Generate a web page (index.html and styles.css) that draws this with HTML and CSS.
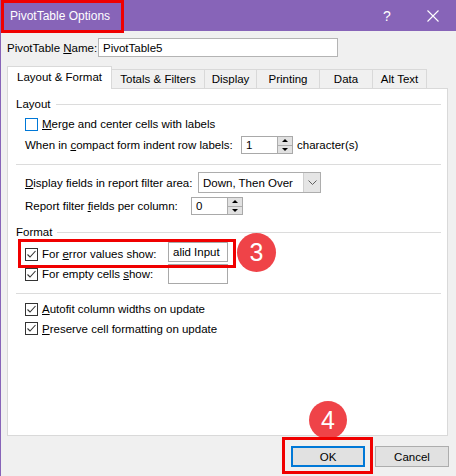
FILE: index.html
```html
<!DOCTYPE html>
<html>
<head>
<meta charset="utf-8">
<title>PivotTable Options</title>
<link rel="stylesheet" href="styles.css">
</head>
<body>
<div class="window">
  <div class="titlebar">
    <span class="title">PivotTable Options</span>
    <span class="tb-btn help">?</span>
    <span class="tb-btn close"><svg width="12" height="12" viewBox="0 0 12 12"><path d="M0.5 0.5L11.5 11.5M11.5 0.5L0.5 11.5" stroke="#fff" stroke-width="1.1" fill="none"/></svg></span>
  </div>
  <div class="content">
    <div class="name-row">
      <span class="name-label">PivotTable <u>N</u>ame:</span>
      <div class="textbox name-box">PivotTable5</div>
    </div>
    <div class="tabs">
      <div class="tab active">Layout &amp; Format</div>
      <div class="tab">Totals &amp; Filters</div>
      <div class="tab">Display</div>
      <div class="tab">Printing</div>
      <div class="tab">Data</div>
      <div class="tab">Alt Text</div>
    </div>
    <div class="panel">
      <div class="section-head">Layout</div>
      <div class="row row-merge">
        <span class="checkbox focus"></span>
        <span class="cb-label"><u>M</u>erge and center cells with labels</span>
      </div>
      <div class="row row-indent">
        <span class="lbl lbl-indent">When in <u>c</u>ompact form indent row labels:</span>
        <div class="spin"><span class="spin-val">1</span><span class="spin-btns"><span class="spin-up"></span><span class="spin-down"></span></span></div>
        <span class="after">character(s)</span>
      </div>
      <div class="sep sep-1"></div>
      <div class="row row-display">
        <span class="lbl lbl-display"><u>D</u>isplay fields in report filter area:</span>
        <div class="combo"><span class="combo-val">Down, Then Over</span><span class="combo-btn"><svg width="9" height="5" viewBox="0 0 9 5"><path d="M0.5 0.5L4.5 4.5L8.5 0.5" stroke="#606060" fill="none" stroke-width="1"/></svg></span></div>
      </div>
      <div class="row row-report">
        <span class="lbl lbl-report">Report filter <u>f</u>ields per column:</span>
        <div class="spin"><span class="spin-val">0</span><span class="spin-btns"><span class="spin-up"></span><span class="spin-down"></span></span></div>
      </div>
      <div class="section-head head-format">Format</div>
      <div class="row row-error">
        <span class="checkbox checked"><svg width="11" height="11" viewBox="0 0 11 11"><path d="M1.5 5.5L4 8L9.5 2" stroke="#333" stroke-width="1.1" fill="none"/></svg></span>
        <span class="cb-label cb-fixed">For <u>e</u>rror values show:</span>
        <div class="textbox val-box up">alid Input</div>
      </div>
      <div class="row row-empty">
        <span class="checkbox checked"><svg width="11" height="11" viewBox="0 0 11 11"><path d="M1.5 5.5L4 8L9.5 2" stroke="#333" stroke-width="1.1" fill="none"/></svg></span>
        <span class="cb-label cb-fixed">For empty cells <u>s</u>how:</span>
        <div class="textbox val-box"></div>
      </div>
      <div class="sep sep-2"></div>
      <div class="row row-autofit">
        <span class="checkbox checked"><svg width="11" height="11" viewBox="0 0 11 11"><path d="M1.5 5.5L4 8L9.5 2" stroke="#333" stroke-width="1.1" fill="none"/></svg></span>
        <span class="cb-label"><u>A</u>utofit column widths on update</span>
      </div>
      <div class="row row-preserve">
        <span class="checkbox checked"><svg width="11" height="11" viewBox="0 0 11 11"><path d="M1.5 5.5L4 8L9.5 2" stroke="#333" stroke-width="1.1" fill="none"/></svg></span>
        <span class="cb-label"><u>P</u>reserve cell formatting on update</span>
      </div>
    </div>
    <div class="footer">
      <div class="btn btn-default">OK</div>
      <div class="btn">Cancel</div>
    </div>
  </div>

  <div class="mark mark-title"></div>
  <div class="mark mark-error"></div>
  <div class="badge badge-3">3</div>
  <div class="badge badge-4">4</div>
  <div class="mark mark-ok"></div>
</div>
</body>
</html>
```

FILE: styles.css
```css
* { box-sizing: border-box; }
html, body { margin: 0; padding: 0; }
body {
  font-family: "Liberation Sans", Arial, sans-serif;
  font-size: 11.5px;
  color: #000;
  background: #f0f0f0;
  white-space: nowrap;
}
u { text-decoration: underline; text-underline-offset: 1px; }

.window {
  position: relative;
  width: 456px;
  height: 476px;
  overflow: hidden;
  background: #f0f0f0;
  border-left: 1px solid #8764b8;
}

.titlebar {
  height: 31px;
  background: #8764b8;
  color: #fff;
  display: flex;
  align-items: center;
  margin-left: -1px;
}
.title { padding-left: 10px; font-size: 12px; }
.tb-btn {
  width: 46px;
  height: 31px;
  display: flex;
  align-items: center;
  justify-content: center;
}
.help { margin-left: auto; font-size: 14px; }

.content { padding-left: 6px; }

.name-row {
  display: flex;
  align-items: center;
  margin-top: 7px;
  height: 19px;
}
.name-label { width: 91px; flex: none; }
.textbox {
  background: #fff;
  border: 1px solid #a9a9a9;
  display: flex;
  align-items: center;
  padding-left: 4px;
  flex: none;
}
.name-box { width: 240px; height: 19px; border-color: #b4b4b4; }

.tabs {
  display: flex;
  align-items: flex-end;
  height: 22px;
  margin-top: 9px;
}
.tab {
  height: 19px;
  border: 1px solid #d9d9d9;
  border-bottom: none;
  margin-left: -1px;
  display: flex;
  align-items: center;
  justify-content: center;
  background: #f0f0f0;
  flex: none;
}
.tab.active {
  height: 23px;
  margin-left: 0;
  margin-bottom: -1px;
  background: #fff;
  position: relative;
  z-index: 1;
  padding-bottom: 2px;
}
.tab:nth-child(1) { width: 105px; }
.tab:nth-child(2) { width: 94px; }
.tab:nth-child(3) { width: 53px; }
.tab:nth-child(4) { width: 64px; }
.tab:nth-child(5) { width: 54px; }
.tab:nth-child(6) { width: 55px; }

.panel {
  width: 441px;
  height: 348px;
  background: #fff;
  border: 1px solid #d9d9d9;
  padding: 7px 6px 0 8px;
}

.section-head {
  display: flex;
  align-items: center;
  height: 16px;
}
.section-head::after {
  content: "";
  flex: 1;
  border-top: 1px solid #dcdcdc;
  margin-left: 5px;
}
.head-format { margin-top: 9px; }

.row {
  display: flex;
  align-items: center;
  margin-left: 9px;
}
.row-merge { height: 24px; }
.row-indent { height: 18px; }
.row-display { height: 21px; }
.row-report { height: 18px; margin-top: 4px; }
.row-error { height: 20px; margin-top: 4px; }
.row-empty { height: 20px; }
.row-autofit { height: 20px; margin-top: 5px; }
.row-preserve { height: 19px; }

.sep { border-top: 1px solid #dcdcdc; }
.sep-1 { margin: 10px 0 7px; }
.sep-2 { margin-top: 9px; }

.checkbox {
  width: 13px;
  height: 13px;
  border: 1px solid #333;
  background: #fff;
  display: flex;
  align-items: center;
  justify-content: center;
  flex: none;
}
.checkbox.focus { border-color: #0078d7; }
.cb-label { margin-left: 4px; flex: none; }
.cb-fixed { width: 126px; }

.lbl { flex: none; }
.lbl-indent { width: 216px; }
.lbl-display { width: 173px; }
.lbl-report { width: 166px; }

.spin {
  width: 52px;
  height: 18px;
  background: #fff;
  border: 1px solid #a9a9a9;
  display: flex;
  align-items: center;
  justify-content: space-between;
  padding-left: 4px;
  flex: none;
}
.spin-btns {
  width: 15px;
  height: 16px;
  display: flex;
  flex-direction: column;
  border-left: 1px solid #adadad;
  background: #e1e1e1;
}
.spin-up, .spin-down {
  flex: 1;
  display: flex;
  align-items: center;
  justify-content: center;
}
.spin-up { border-bottom: 1px solid #adadad; }
.spin-up::before {
  content: "";
  border-left: 3px solid transparent;
  border-right: 3px solid transparent;
  border-bottom: 3px solid #000;
}
.spin-down::before {
  content: "";
  border-left: 3px solid transparent;
  border-right: 3px solid transparent;
  border-top: 3px solid #000;
}
.after { margin-left: 4px; }

.combo {
  width: 123px;
  height: 21px;
  background: #fff;
  border: 1px solid #adadad;
  display: flex;
  align-items: center;
  justify-content: space-between;
  padding-left: 4px;
  flex: none;
}
.combo-btn {
  width: 17px;
  height: 19px;
  background: #e5e5e5;
  border-left: 1px solid #cfcfcf;
  display: flex;
  align-items: center;
  justify-content: center;
}

.val-box { width: 60px; height: 20px; }
.val-box.up { margin-bottom: 4px; }

.footer {
  display: flex;
  justify-content: flex-end;
  gap: 10px;
  margin-top: 10px;
  padding-right: 7px;
}
.btn {
  width: 74px;
  height: 21px;
  background: #e1e1e1;
  border: 1px solid #adadad;
  display: flex;
  align-items: center;
  justify-content: center;
}
.btn-default { border: 2px solid #0078d7; }

.mark {
  position: absolute;
  border: 3px solid #f00000;
}
.mark-title { left: 0; top: 0; width: 123px; height: 33px; }
.mark-error { left: 17px; top: 239px; width: 218px; height: 29px; }
.mark-ok { left: 281px; top: 437px; width: 91px; height: 37px; }

.badge {
  position: absolute;
  width: 39px;
  height: 39px;
  border-radius: 50%;
  background: #ef4348;
  color: #fff;
  font-size: 25px;
  display: flex;
  align-items: center;
  justify-content: center;
}
.badge-3 { left: 236px; top: 233px; }
.badge-4 { left: 308px; top: 401px; width: 38px; height: 38px; }
```
